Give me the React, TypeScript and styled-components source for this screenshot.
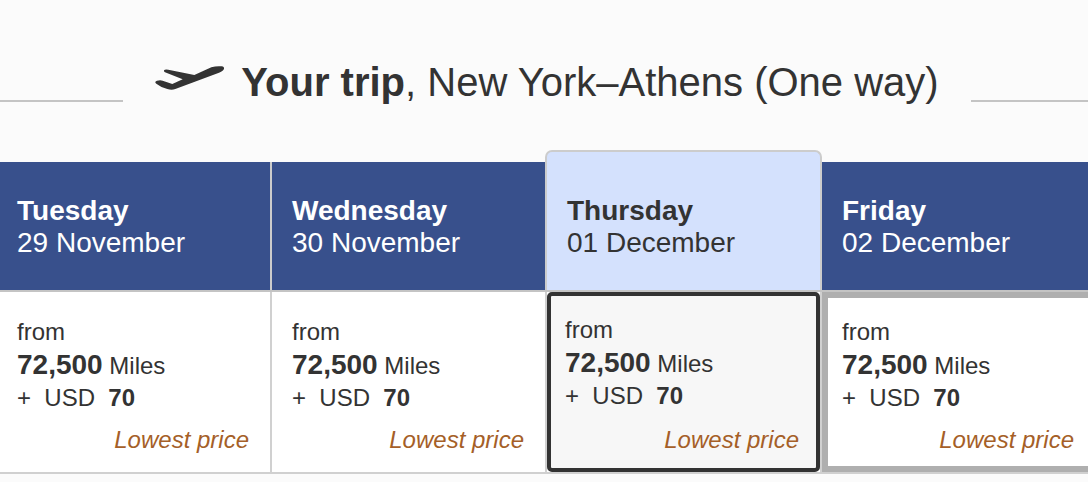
import React, { useState } from "react";
import styled, { createGlobalStyle, css } from "styled-components";

const GlobalStyle = createGlobalStyle`
  * { box-sizing: border-box; }
  body {
    margin: 0;
    background: #fbfbfb;
    color: #333;
    font-family: "Liberation Sans", Helvetica, Arial, sans-serif;
  }
`;

const Page = styled.main`
  padding-top: 58px;
  overflow-x: hidden;
`;

const TitleBar = styled.header`
  display: flex;
  align-items: flex-end;
  gap: 32px;
  width: calc(100% + 6px);
`;

const Rule = styled.span`
  flex: 1;
  height: 2px;
  margin-bottom: 4px;
  background: #c4c4c4;
`;

const Title = styled.h1`
  display: flex;
  align-items: center;
  gap: 16px;
  margin: 0;
  font-size: 40px;
  line-height: 48px;
  font-weight: 400;
  white-space: nowrap;
`;

const PlaneIcon = styled.svg`
  width: 70px;
  height: 26px;
  margin-bottom: 8px;
  fill: #333;
`;

const Carousel = styled.section`
  padding-top: 56px;
  overflow: hidden;
`;

/* Slightly wider than the page, so the outer days are cut at its edges. */
const Fares = styled.table`
  width: calc(100% + 12px);
  margin-left: -3px;
  table-layout: fixed;
  border-collapse: separate;
  border-spacing: 0;
`;

const DayCell = styled.th`
  padding: 0;
  background: #38508c;
  border-bottom: 2px solid #c4c4c4;
  text-align: left;
  vertical-align: bottom;
`;

const DayLabel = styled.div<{ $selected: boolean }>`
  padding: 33px 20px 31px;
  border-right: 2px solid #ccc;
  color: #fff;
  font-size: 28px;
  line-height: 32px;
  font-weight: 400;
  white-space: nowrap;
  ${({ $selected }) =>
    $selected &&
    css`
      position: relative;
      margin: -12px 0 0 -2px;
      padding-top: 43px;
      border: 2px solid #ccc;
      border-bottom: 0;
      border-radius: 7px 7px 0 0;
      background: #d4e1fd;
      color: #333;
    `}
`;

const DayName = styled.strong`
  display: block;
`;

const FareCell = styled.td`
  padding: 0;
  background: #fff;
  border-right: 2px solid #d0d0d0;
  border-bottom: 2px solid #d0d0d0;
`;

type FareState = "plain" | "selected" | "focused";

const fareStyles = {
  plain: css`
    padding: 24px 21px 16px 20px;
    border: 0;
  `,
  selected: css`
    padding: 18px 17px 12px 14px;
    border: 4px solid #333;
    border-radius: 5px;
    background: #f7f7f7;
  `,
  focused: css`
    padding: 18px 15px 10px 14px;
    border: 6px solid #afafaf;
  `,
};

const FareButton = styled.button<{ $state: FareState }>`
  display: flex;
  flex-direction: column;
  justify-content: space-between;
  width: 100%;
  min-height: 180px;
  background: transparent;
  color: #333;
  font: inherit;
  font-size: 24px;
  line-height: 32px;
  text-align: left;
  white-space: nowrap;
  cursor: pointer;
  outline: none;
  ${({ $state }) => fareStyles[$state]}
`;

const Line = styled.span`
  display: block;
  white-space: pre;
`;

const MilesLine = styled(Line)`
  padding-top: 1px;
`;

const Miles = styled.strong`
  font-size: 28px;
`;

const Note = styled.em`
  align-self: flex-end;
  color: #a55f28;
`;

const days = [
  { name: "Tuesday", date: "29 November" },
  { name: "Wednesday", date: "30 November" },
  { name: "Thursday", date: "01 December" },
  { name: "Friday", date: "02 December" },
];

export default function App() {
  const [selected, setSelected] = useState(2);
  const [focused, setFocused] = useState(3);

  const stateOf = (i: number): FareState =>
    i === selected ? "selected" : i === focused ? "focused" : "plain";

  return (
    <Page>
      <GlobalStyle />
      <TitleBar>
        <Rule />
        <Title>
          <PlaneIcon viewBox="78 46 210 78" aria-hidden="true">
            <path d="M79 99Q78 95 84 93Q94 90 101 93L130 103L161 89L108 68Q104 66 105 62Q108 58 118 60L196 76L247 53Q263 48 278 50Q286 51 285 57Q284 63 270 69L139 118Q128 122 115 118Q94 112 82 102Z" />
          </PlaneIcon>
          <span>
            <strong>Your trip</strong>, New York–Athens (One way)
          </span>
        </Title>
        <Rule />
      </TitleBar>
      <Carousel aria-label="Fares by day">
        <Fares>
          <thead>
            <tr>
              {days.map((day, i) => (
                <DayCell key={day.date} scope="col">
                  <DayLabel $selected={i === selected}>
                    <DayName>{day.name}</DayName>
                    {day.date}
                  </DayLabel>
                </DayCell>
              ))}
            </tr>
          </thead>
          <tbody>
            <tr>
              {days.map((day, i) => (
                <FareCell key={day.date}>
                  <FareButton
                    type="button"
                    $state={stateOf(i)}
                    aria-pressed={i === selected}
                    onClick={() => setSelected(i)}
                    onFocus={() => setFocused(i)}
                    onMouseEnter={() => setFocused(i)}
                  >
                    <span>
                      <Line>from</Line>
                      <MilesLine>
                        <Miles>72,500</Miles> Miles
                      </MilesLine>
                      <Line>
                        {"+  USD  "}
                        <strong>70</strong>
                      </Line>
                    </span>
                    <Note>Lowest price</Note>
                  </FareButton>
                </FareCell>
              ))}
            </tr>
          </tbody>
        </Fares>
      </Carousel>
    </Page>
  );
}
